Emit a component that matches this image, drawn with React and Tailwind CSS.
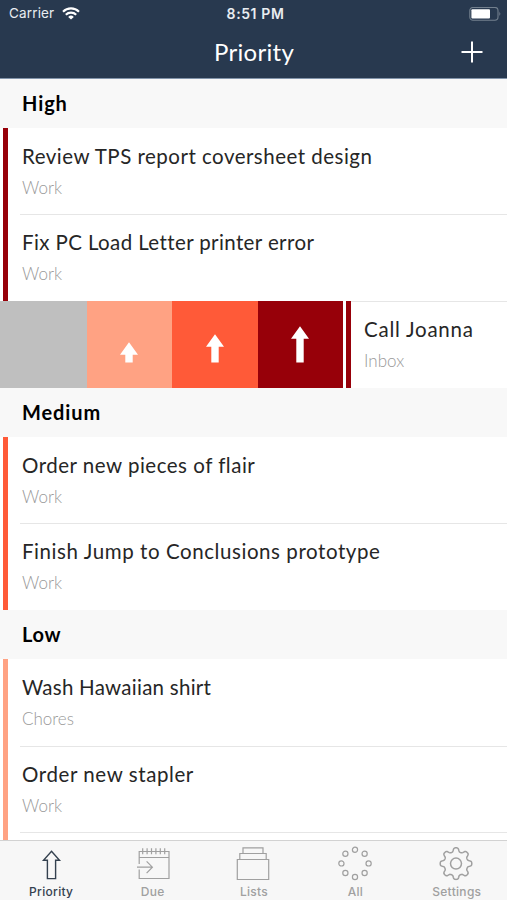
import React from 'react'

const sections = [
  {
    title: 'High',
    titleClass: 'tracking-[0.9px]',
    bar: 'bg-[#970009]',
    tasks: [
      { name: 'Review TPS report coversheet design', list: 'Work', tracking: 'tracking-[0.49px]' },
      { name: 'Fix PC Load Letter printer error', list: 'Work', tracking: 'tracking-[0.39px]' },
      { name: 'Call Joanna', list: 'Inbox', tracking: 'tracking-[0.75px]', swiped: true }
    ]
  },
  {
    title: 'Medium',
    titleClass: 'tracking-[0.9px]',
    bar: 'bg-[#ff5a38]',
    tasks: [
      { name: 'Order new pieces of flair', list: 'Work', tracking: 'tracking-[0.5px]' },
      { name: 'Finish Jump to Conclusions prototype', list: 'Work', tracking: 'tracking-[0.57px]' }
    ]
  },
  {
    title: 'Low',
    titleClass: 'tracking-[0.7px]',
    bar: 'bg-[#ffa283]',
    tasks: [
      { name: 'Wash Hawaiian shirt', list: 'Chores', tracking: 'tracking-[0.26px]' },
      { name: 'Order new stapler', list: 'Work', tracking: 'tracking-[0.58px]' },
      { name: '', list: '', tracking: '' }
    ]
  }
]

// gear outline with eight rounded teeth
const gearPath = Array.from({ length: 161 }, (_, i) => {
  const a = (i / 160) * Math.PI * 2
  const r = 13.9 + 2 * Math.tanh(1.8 * Math.cos(8 * a))
  return `${i ? 'L' : 'M'}${(18 + r * Math.sin(a)).toFixed(2)} ${(18 - r * Math.cos(a)).toFixed(2)}`
}).join('') + 'Z'

const dots = Array.from({ length: 8 }, (_, i) => {
  const a = (i * Math.PI) / 4
  return { x: 18 + 13.6 * Math.sin(a), y: 17.4 - 13.6 * Math.cos(a) }
})

const tabs = [
  {
    label: 'Priority',
    active: true,
    icon: <path d="M18.5 5.2 26.5 14.3H22.6V32.6H14.4V14.3H10.5Z" strokeWidth="1.4" />
  },
  {
    label: 'Due',
    icon: (
      <>
        <path d="M5.2 23.5V32.5H35V5.5H5.2V18M5.2 11.5H35" />
        <path d="M8.7 2.3V8.3M13.1 2.3V8.3M17.5 2.3V8.3M21.9 2.3V8.3M26.3 2.3V8.3M30.7 2.3V8.3" />
        <path d="M3 21.2H18.2M12.6 15.3 18.4 21.2 12.6 27.1" />
      </>
    )
  },
  {
    label: 'Lists',
    icon: (
      <>
        <path d="M2.3 13.5H33.7V33.5H2.3Z" />
        <path d="M4.8 13.5V7.5H31.2V13.5" />
        <path d="M8 7.5V1.8H28V7.5" />
      </>
    )
  },
  {
    label: 'All',
    icon: dots.map((d, i) => <circle key={i} cx={d.x} cy={d.y} r="2.6" />)
  },
  {
    label: 'Settings',
    icon: (
      <g transform="translate(0 -0.4)" strokeWidth="1.5">
        <path d={gearPath} />
        <circle cx="18" cy="18" r="5.5" />
      </g>
    )
  }
]

function StatusBar() {
  return (
    <div className="grid h-[27px] grid-cols-3 items-center pl-[9px] pr-[6px] font-['Inter',sans-serif] leading-none text-[#e9edf1]">
      <div className="flex items-center gap-[8px]">
        <span className="text-[13.5px] tracking-[0.15px]">Carrier</span>
        <svg className="h-[13px] w-[18px]" viewBox="0 0 18 13" fill="none" stroke="#fff" strokeWidth="2.1">
          <path d="M1 4.7A11.3 11.3 0 0 1 17 4.7" />
          <path d="M3.8 7.8A7.4 7.4 0 0 1 14.2 7.8" />
          <path d="M9 12.6 6.2 9.9A4 4 0 0 1 11.8 9.9Z" fill="#fff" stroke="none" />
        </svg>
      </div>
      <span className="pl-[1px] pt-[1px] text-center text-[14px] font-semibold tracking-[0.6px]">8:51 PM</span>
      <svg className="h-[14px] w-[32px] justify-self-end" viewBox="0 0 32 14" fill="none">
        <rect x="0.8" y="0.5" width="28.2" height="12.8" rx="3.2" stroke="#73808e" strokeWidth="1.1" />
        <rect x="2.4" y="2.2" width="18.6" height="9.4" rx="1" fill="#fff" />
        <path d="M30.5 4.6Q32 6.8 30.5 9.1Z" fill="#8d98a4" />
      </svg>
    </div>
  )
}

function SwipeArrow({ top }) {
  const head = top + 12.5
  return (
    <svg className="h-[86px] w-[36px]" viewBox="0 0 36 86" fill="#fff">
      <path d={`M18 ${top}L27 ${head}H21.7V61.5H14.3V${head}H9Z`} />
    </svg>
  )
}

function SwipeActions() {
  return (
    <div className="flex shrink-0">
      <div className="w-[86.5px] bg-[#bfbfbf]" />
      <div className="flex w-[85.5px] justify-center bg-[#ffa283]"><SwipeArrow top={41.3} /></div>
      <div className="flex w-[85.5px] justify-center bg-[#ff5a38]"><SwipeArrow top={33.3} /></div>
      <div className="flex w-[85.5px] justify-center bg-[#970009]"><SwipeArrow top={25.2} /></div>
    </div>
  )
}

function TaskRow({ task, bar, first }) {
  return (
    <div className="flex h-[86.7px] shrink-0 overflow-hidden">
      {task.swiped && <SwipeActions />}
      <div className={`ml-[3px] w-[5px] shrink-0 ${bar}`} />
      <div className={`flex-1 border-t pt-[14px] ${task.swiped ? 'pl-[13px]' : 'ml-[12px] pl-[2px]'} ${first ? 'border-transparent' : 'border-[#e6e6e6]'}`}>
        <div className={`whitespace-nowrap text-[20.5px] leading-[26px] text-[#262626] ${task.tracking}`}>{task.name}</div>
        <div className="mt-[9px] text-[17px] font-light leading-[20px] text-[#999]">{task.list}</div>
      </div>
    </div>
  )
}

export default function App() {
  return (
    <div className="flex h-[900px] w-[507px] flex-col overflow-hidden bg-white font-['Lato',sans-serif]">
      <header className="h-[79px] shrink-0 border-b border-[#8294aa] bg-[#28394f]">
        <StatusBar />
        <div className="flex h-[50px] items-center pr-[24px] text-white">
          <h1 className="flex-1 pl-[47px] text-center text-[24px] font-normal tracking-[0.3px]">Priority</h1>
          <svg className="h-[22px] w-[22px] shrink-0" viewBox="0 0 22 22" stroke="#fff" strokeWidth="2">
            <path d="M11 0.5V21.5M0.5 11H21.5" />
          </svg>
        </div>
      </header>

      <main className="flex min-h-0 flex-1 flex-col overflow-hidden">
        {sections.map(s => (
          <React.Fragment key={s.title}>
            <div className="h-[48.8px] shrink-0 bg-[#f8f8f8] pl-[22px] pt-[11px]">
              <h2 className={`text-[20px] font-bold leading-[26px] text-black ${s.titleClass}`}>{s.title}</h2>
            </div>
            {s.tasks.map((t, i) => (
              <TaskRow key={i} task={t} bar={s.bar} first={i === 0} />
            ))}
          </React.Fragment>
        ))}
      </main>

      <nav className="grid h-[60px] shrink-0 grid-cols-5 border-t border-[#d2d2d2] bg-[#f7f7f7] font-['Inter',sans-serif]">
        {tabs.map(t => (
          <div key={t.label} className={`flex flex-col items-center pt-[5px] ${t.active ? 'text-[#34414f]' : 'text-[#a0a0a0]'}`}>
            <svg className="h-[36px] w-[36px]" viewBox="0 0 36 36" fill="none" stroke="currentColor" strokeWidth="1.2">
              {t.icon}
            </svg>
            <span className="mt-[3px] pl-[1px] text-[12px] font-medium leading-[14px] tracking-[0.3px]">{t.label}</span>
          </div>
        ))}
      </nav>
    </div>
  )
}
